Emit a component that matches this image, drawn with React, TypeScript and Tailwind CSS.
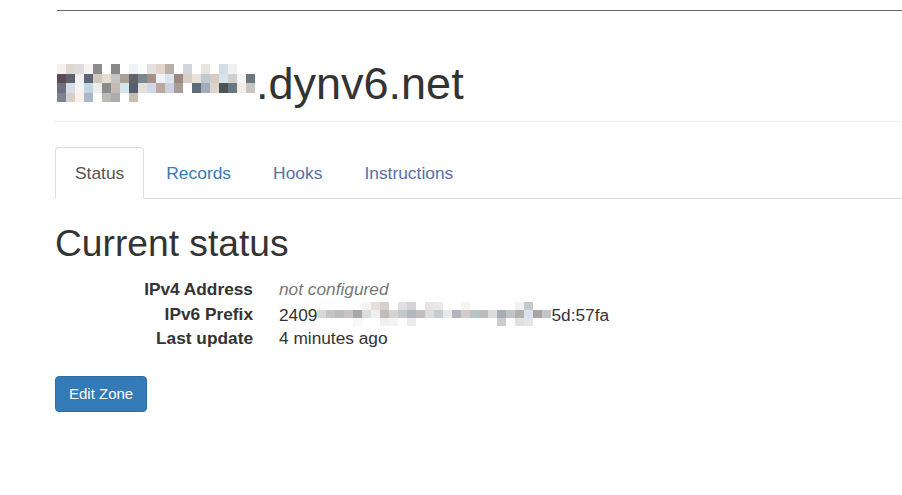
import React from "react";

const HOST_MOSAIC = [
  ["#f6f2ee", "#dcd8d4", "#dcdcdc", "#f6f4f0", "#8c8c8c", "#ffffff", "#888888", "#ffffff", "#eef2f6", "#ffffff", "#e4e2e0", "#e6d4cc", "#b8b0a8", "#ffffff", "#d0d4dc", "#ffffff", "#e8e4e0", "#ffffff", "#d4dce4", "#f0f0f0", "#ffffff", "#ffffff"],
  ["#5c4a58", "#5c6470", "#f0f0f0", "#5c6878", "#d4c8bc", "#e8dcd0", "#c4c4c4", "#a8a098", "#606468", "#7c8890", "#a09088", "#eef2f8", "#dce4ec", "#9c8880", "#d8d0c4", "#e8e4dc", "#c0c8d0", "#d8ccc0", "#d8e4ec", "#d0d0d0", "#f4f4f4", "#6c7880"],
  ["#6c7080", "#d8dce4", "#f4f4f4", "#c4d4e0", "#eceeee", "#8c8c8c", "#c4bcb4", "#d8e4ec", "#546070", "#e4e0dc", "#d0d8e8", "#bca89c", "#d0d0e4", "#a89c94", "#ffffff", "#5c6c78", "#a0acb8", "#dcd4cc", "#4c5458", "#687880", "#f0ece8", "#c8c4c0"],
  ["#7c8494", "#d8d0c8", "#fcf0e4", "#a8b8c8", "#ffffff", "#bcb8b4", "#acacac", "#ffffff", "#c8bcb0", "#ffffff", "#ffffff", "#ffffff", "#ffffff", "#ffffff", "#ffffff", "#ffffff", "#ffffff", "#ffffff", "#ffffff", "#ffffff", "#ffffff", "#ffffff"],
];

const PREFIX_MOSAIC = [
  ["#ffffff", "#ffffff", "#ffffff", "#ffffff", "#ffffff", "#f4f4f4", "#e4e0e0", "#d8d0cc", "#ffffff", "#e0e0e0", "#d4d4d4", "#ffffff", "#e8e4e4", "#ece8e8", "#ffffff", "#ffffff", "#f8f4f0", "#ffffff", "#ffffff", "#ffffff", "#ffffff", "#ffffff", "#f0f0f0", "#c8c8c8", "#ffffff", "#ffffff"],
  ["#d8d8d8", "#c4c4c4", "#bcbcbc", "#c8c4c4", "#a8a8a8", "#dcdcdc", "#f0f0f0", "#c0bcbc", "#d4d4d4", "#c4c8cc", "#b4b8bc", "#c0bcc0", "#dcdcdc", "#c4ccd0", "#e8e8e8", "#b4b4bc", "#d0cccc", "#b8c4c8", "#bcbcbc", "#dcdcdc", "#a8acb4", "#c0c4c8", "#b0b0b0", "#d8e4ec", "#a8a4a4", "#c4c4c4"],
  ["#ffffff", "#ffffff", "#ffffff", "#ffffff", "#f8f8f8", "#ffffff", "#ffffff", "#f0f0f0", "#f4f4f4", "#ffffff", "#ececec", "#ffffff", "#ffffff", "#ffffff", "#ffffff", "#ffffff", "#ffffff", "#ffffff", "#ffffff", "#ffffff", "#cccccc", "#ffffff", "#e4e0e0", "#e4e4ec", "#ffffff", "#ffffff"],
];

// pixelated (redacted) part of a text; overflow-hidden puts its baseline at the bottom edge
const Mosaic = ({ rows, cell, className }: { rows: string[][]; cell: string; className: string }) => (
  <span className={`inline-block overflow-hidden ${className}`}>
    {rows.map((row, i) => (
      <span key={i} className="flex">
        {row.map((c, j) => (
          <span key={j} className={cell} style={{ backgroundColor: c }} />
        ))}
      </span>
    ))}
  </span>
);

const TABS = [
  { id: "status", label: "Status", color: "" },
  { id: "records", label: "Records", color: "text-[#337ab7]" },
  { id: "hooks", label: "Hooks", color: "text-[#5a6eaa]" },
  { id: "instructions", label: "Instructions", color: "text-[#5a6eaa]" },
];

export default function App() {
  return (
    <div className="min-h-screen bg-white pl-[55px] font-['Liberation_Sans',Arial,sans-serif] text-[#333]">
      <div className="pt-[10px]">
        <div className="ml-[2px] border-t border-[#666]" />
      </div>

      <div className="mt-[49px] border-b border-[#eee] pb-[13px]">
        <h1 className="h-[48px] whitespace-nowrap pl-[2px] text-[45px] leading-[48px] font-normal">
          <Mosaic rows={HOST_MOSAIC} cell="block w-[9px] h-[9.5px]" className="mr-[1px] align-[-3px]" />
          .dynv6.net
        </h1>
      </div>

      <ul className="mt-[25px] flex border-b border-[#ddd] text-[17.4px] leading-[22px]">
        {TABS.map((tab) => (
          <li key={tab.id} className="-mb-px mr-[2px]">
            {tab.id === "status" ? (
              <span className="block rounded-t-[4px] border border-[#ddd] border-b-transparent bg-white px-[19px] py-[14px] text-[#555]">
                {tab.label}
              </span>
            ) : (
              <a href="#" className={`block border border-transparent px-[19px] py-[14px] ${tab.color}`}>
                {tab.label}
              </a>
            )}
          </li>
        ))}
      </ul>

      <h2 className="mt-[24px] text-[37.2px] leading-[40px] font-normal">Current status</h2>

      <dl className="mt-[14px] grid grid-cols-[198px_1fr] gap-x-[26px] text-[17.3px] leading-[24.5px]">
        <dt className="text-right font-bold">IPv4 Address</dt>
        <dd className="italic text-[#777]">not configured</dd>
        <dt className="text-right font-bold">IPv6 Prefix</dt>
        <dd className="h-[24.5px] whitespace-nowrap">
          2409
          <Mosaic rows={PREFIX_MOSAIC} cell="block w-[9px] h-[8px]" className="align-[-5px]" />
          5d:57fa
        </dd>
        <dt className="text-right font-bold">Last update</dt>
        <dd>4 minutes ago</dd>
      </dl>

      <button className="mt-[25px] rounded-[4px] border border-[#2e6da4] bg-[#337ab7] px-[13px] text-[15px] leading-[34px] text-white">
        Edit Zone
      </button>
    </div>
  );
}
